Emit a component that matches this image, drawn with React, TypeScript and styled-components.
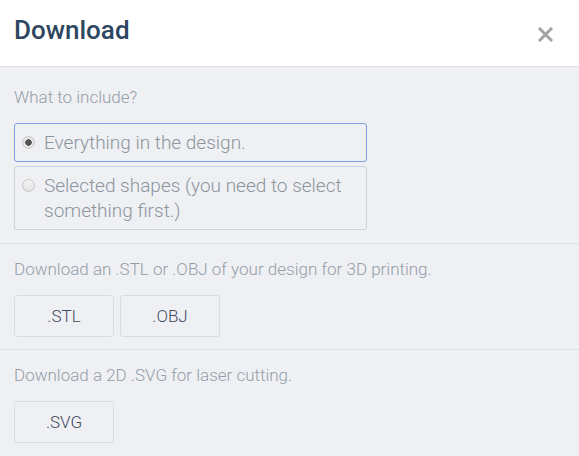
import styled, { createGlobalStyle } from "styled-components";

const GlobalStyle = createGlobalStyle`
  * {
    box-sizing: border-box;
  }

  body {
    margin: 0;
    background: #eff0f4;
    font-family: Roboto, "Open Sans", sans-serif;
  }
`;

const App = () => {
  return (
    <>
      <GlobalStyle />
      <Dialog>
        <Header>
          <Title>Download</Title>
          <CloseButton aria-label="Close">
            <svg width="15" height="15" viewBox="0 0 15 15">
              <path
                d="M2 2 L13 13 M13 2 L2 13"
                stroke="#a3a3a3"
                strokeWidth="3"
                strokeLinecap="square"
              />
            </svg>
          </CloseButton>
        </Header>

        <Section $first>
          <Label>What to include?</Label>
          <Options>
            <Option $selected>
              <Radio $checked />
              <OptionText>Everything in the design.</OptionText>
            </Option>
            <Option>
              <Radio />
              <OptionText>
                Selected shapes (you need to select something first.)
              </OptionText>
            </Option>
          </Options>
        </Section>

        <Section>
          <Label>Download an .STL or .OBJ of your design for 3D printing.</Label>
          <ButtonRow>
            <FormatButton>.STL</FormatButton>
            <FormatButton>.OBJ</FormatButton>
          </ButtonRow>
        </Section>

        <Section $last>
          <Label>Download a 2D .SVG for laser cutting.</Label>
          <ButtonRow>
            <FormatButton>.SVG</FormatButton>
          </ButtonRow>
        </Section>
      </Dialog>
    </>
  );
};

export default App;

const Dialog = styled.div`
  width: 579px;
  min-height: 456px;
  background: #eff0f4;
`;

const Header = styled.div`
  height: 67px;
  padding: 0 14px;
  display: flex;
  align-items: center;
  justify-content: space-between;
  background: #fff;
  border-bottom: 1px solid #dcdfe5;
`;

const Title = styled.h1`
  margin: 0 0 6px;
  font-size: 26px;
  font-weight: 500;
  color: #2e4761;
`;

const CloseButton = styled.button`
  display: flex;
  padding: 0;
  margin: 3px 12px 0 0;
  border: none;
  background: none;
  cursor: pointer;
`;

const Section = styled.div<{ $first?: boolean; $last?: boolean }>`
  padding: ${({ $first }) => ($first ? "18px 14px 13px" : "13px 14px 12px")};
  border-bottom: ${({ $last }) => ($last ? "none" : "1px solid #dcdfe5")};
`;

const Label = styled.div`
  font-size: 17px;
  font-weight: 300;
  line-height: 24px;
  color: #959ea8;
  margin-bottom: 14px;
`;

const Options = styled.div`
  width: 353px;
  display: flex;
  flex-direction: column;
  gap: 4px;
`;

const Option = styled.label<{ $selected?: boolean }>`
  display: flex;
  align-items: flex-start;
  gap: 9px;
  padding: 6px 7px;
  border: 1px solid ${({ $selected }) => ($selected ? "#7d9fe0" : "#cbd1da")};
  border-radius: 3px;
  cursor: pointer;
`;

const Radio = styled.span<{ $checked?: boolean }>`
  flex: none;
  width: 13px;
  height: 13px;
  margin-top: 6px;
  border-radius: 50%;
  border: 1px solid #c6c6c6;
  background: ${({ $checked }) =>
    $checked
      ? "radial-gradient(circle, #555 0 3px, #e6e6e6 3.5px)"
      : "linear-gradient(#f4f4f4, #e2e2e2)"};
`;

const OptionText = styled.span`
  font-size: 19px;
  font-weight: 300;
  line-height: 25px;
  color: #8c949d;
`;

const ButtonRow = styled.div`
  display: flex;
  gap: 6px;
`;

const FormatButton = styled.button`
  width: 100px;
  height: 42px;
  padding: 0;
  border: 1px solid #d9dde3;
  border-radius: 3px;
  background: #eff0f4;
  font-family: Roboto, "Open Sans", sans-serif;
  font-size: 17px;
  font-weight: 300;
  color: #3f4b5c;
  cursor: pointer;
`;
